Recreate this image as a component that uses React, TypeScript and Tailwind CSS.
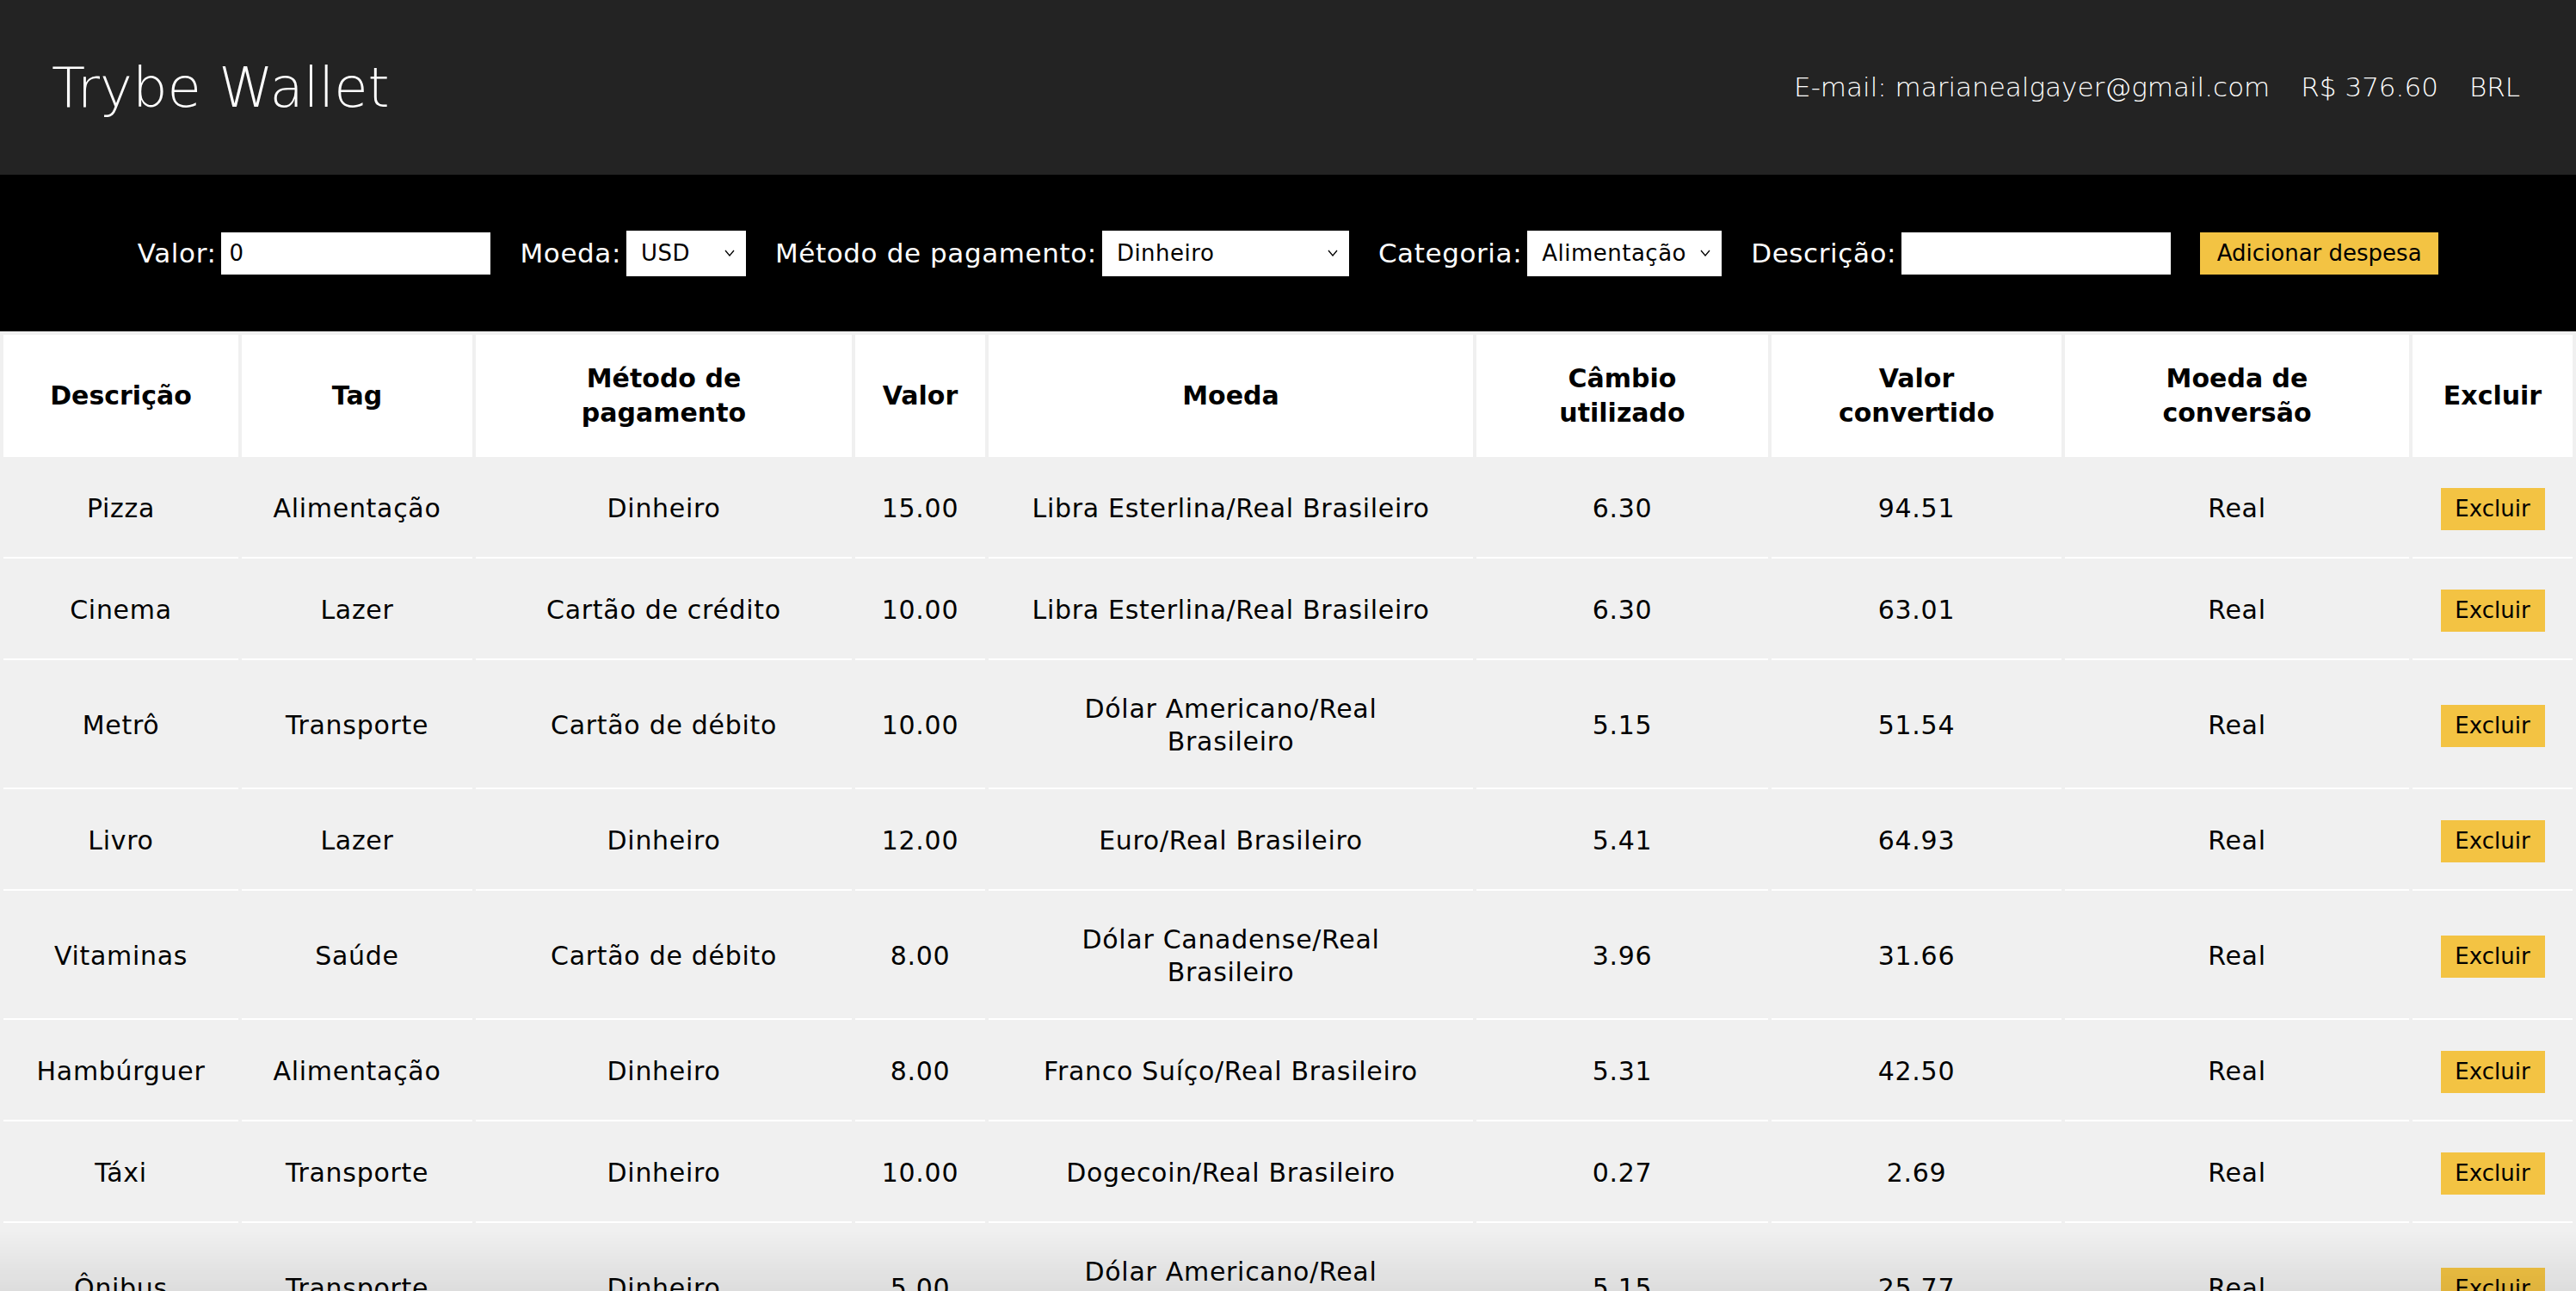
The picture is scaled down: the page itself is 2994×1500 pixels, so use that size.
import React from 'react'

type Expense = {
  description: string
  tag: string
  method: string
  value: string
  currency: string
  rate: string
  converted: string
}

const expenses: Expense[] = [
  { description: 'Pizza', tag: 'Alimentação', method: 'Dinheiro', value: '15.00', currency: 'Libra Esterlina/Real Brasileiro', rate: '6.30', converted: '94.51' },
  { description: 'Cinema', tag: 'Lazer', method: 'Cartão de crédito', value: '10.00', currency: 'Libra Esterlina/Real Brasileiro', rate: '6.30', converted: '63.01' },
  { description: 'Metrô', tag: 'Transporte', method: 'Cartão de débito', value: '10.00', currency: 'Dólar Americano/Real Brasileiro', rate: '5.15', converted: '51.54' },
  { description: 'Livro', tag: 'Lazer', method: 'Dinheiro', value: '12.00', currency: 'Euro/Real Brasileiro', rate: '5.41', converted: '64.93' },
  { description: 'Vitaminas', tag: 'Saúde', method: 'Cartão de débito', value: '8.00', currency: 'Dólar Canadense/Real Brasileiro', rate: '3.96', converted: '31.66' },
  { description: 'Hambúrguer', tag: 'Alimentação', method: 'Dinheiro', value: '8.00', currency: 'Franco Suíço/Real Brasileiro', rate: '5.31', converted: '42.50' },
  { description: 'Táxi', tag: 'Transporte', method: 'Dinheiro', value: '10.00', currency: 'Dogecoin/Real Brasileiro', rate: '0.27', converted: '2.69' },
  { description: 'Ônibus', tag: 'Transporte', method: 'Dinheiro', value: '5.00', currency: 'Dólar Americano/Real Brasileiro', rate: '5.15', converted: '25.77' },
]

const columns = [
  { label: 'Descrição', col: 'w-[273px]', th: 'px-[10px]' },
  { label: 'Tag', col: 'w-[268px]', th: 'px-[10px]' },
  { label: 'Método de pagamento', col: 'w-[437px]', th: 'px-[40px]' },
  { label: 'Valor', col: 'w-[151px]', th: 'px-[6px]' },
  { label: 'Moeda', col: 'w-[563px]', th: 'px-[10px]' },
  { label: 'Câmbio utilizado', col: 'w-[339px]', th: 'px-[40px]' },
  { label: 'Valor convertido', col: 'w-[337px]', th: 'px-[40px]' },
  { label: 'Moeda de conversão', col: 'w-[400px]', th: 'px-[40px]' },
  { label: 'Excluir', col: 'w-[186px]', th: 'px-[6px]' },
]

function Chevron() {
  return (
    <svg
      width="12"
      height="8"
      viewBox="0 0 12 8"
      className="pointer-events-none absolute right-[13px] top-1/2 -translate-y-1/2"
      aria-hidden
    >
      <polyline points="1,1 6,7 11,1" fill="none" stroke="#000" strokeWidth="1.3" />
    </svg>
  )
}

function Select({ value, width }: { value: string; width: string }) {
  return (
    <div className={`relative h-[53px] ${width}`}>
      <select
        defaultValue={value}
        className="h-full w-full appearance-none bg-white pl-[17px] pr-[30px] text-[26px] tracking-[0.5px] text-black outline-none"
      >
        <option>{value}</option>
      </select>
      <Chevron />
    </div>
  )
}

function Field({ label, children }: { label: string; children: React.ReactNode }) {
  return (
    <label className="flex items-center gap-[6px] text-[31px] tracking-[0.6px] text-white">
      <span>{label}</span>
      {children}
    </label>
  )
}

const cell = 'h-[114px] border-b-2 border-white text-center align-middle text-[30px] leading-[38px] tracking-[0.7px] text-black'

export default function App() {
  return (
    <div className="relative min-h-screen bg-[#f0f0f0] font-['DejaVu_Sans',sans-serif]">
      <header className="flex h-[203px] items-center justify-between bg-[#232323] pl-[60px] pr-[65px] text-white">
        <h1 className="text-[64px] font-extralight leading-none">Trybe Wallet</h1>
        <div className="flex gap-[36px] text-[31px] font-extralight text-white">
          <span>E-mail: marianealgayer@gmail.com</span>
          <span>R$ 376.60</span>
          <span>BRL</span>
        </div>
      </header>

      <form className="flex h-[182px] items-center justify-center gap-[34px] bg-black">
        <Field label="Valor:">
          <input
            defaultValue="0"
            className="h-[49px] w-[313px] bg-white px-[9px] text-[26px] text-black outline-none"
          />
        </Field>
        <Field label="Moeda:">
          <Select value="USD" width="w-[139px]" />
        </Field>
        <Field label="Método de pagamento:">
          <Select value="Dinheiro" width="w-[287px]" />
        </Field>
        <Field label="Categoria:">
          <Select value="Alimentação" width="w-[226px]" />
        </Field>
        <Field label="Descrição:">
          <input className="h-[49px] w-[313px] bg-white px-[9px] text-[26px] text-black outline-none" />
        </Field>
        <button
          type="button"
          className="h-[49px] w-[277px] bg-[#f3c343] text-[26px] text-black"
        >
          Adicionar despesa
        </button>
      </form>

      <table className="w-full table-fixed border-separate border-spacing-[4px]">
        <colgroup>
          {columns.map((c) => (
            <col key={c.label} className={c.col} />
          ))}
        </colgroup>
        <thead>
          <tr>
            {columns.map((c) => (
              <th
                key={c.label}
                className={`h-[142px] bg-white text-center align-middle text-[30px] font-bold leading-[40px] text-black ${c.th}`}
              >
                {c.label}
              </th>
            ))}
          </tr>
        </thead>
        <tbody>
          {expenses.map((e) => (
            <tr key={e.description}>
              <td className={`${cell} px-[10px] py-[34px]`}>{e.description}</td>
              <td className={`${cell} px-[10px] py-[34px]`}>{e.tag}</td>
              <td className={`${cell} px-[10px] py-[34px]`}>{e.method}</td>
              <td className={`${cell} px-[6px] py-[34px]`}>{e.value}</td>
              <td className={`${cell} px-[44px] py-[34px]`}>{e.currency}</td>
              <td className={`${cell} px-[10px] py-[34px]`}>{e.rate}</td>
              <td className={`${cell} px-[10px] py-[34px]`}>{e.converted}</td>
              <td className={`${cell} px-[10px] py-[34px]`}>Real</td>
              <td className={`${cell} px-[6px] py-0`}>
                <button
                  type="button"
                  className="h-[49px] w-[121px] bg-[#f3c343] align-middle text-[26px] tracking-normal text-black"
                >
                  Excluir
                </button>
              </td>
            </tr>
          ))}
        </tbody>
      </table>

      <div className="pointer-events-none fixed inset-x-0 bottom-0 h-[70px] bg-gradient-to-b from-transparent to-black/[0.08]" />
    </div>
  )
}
